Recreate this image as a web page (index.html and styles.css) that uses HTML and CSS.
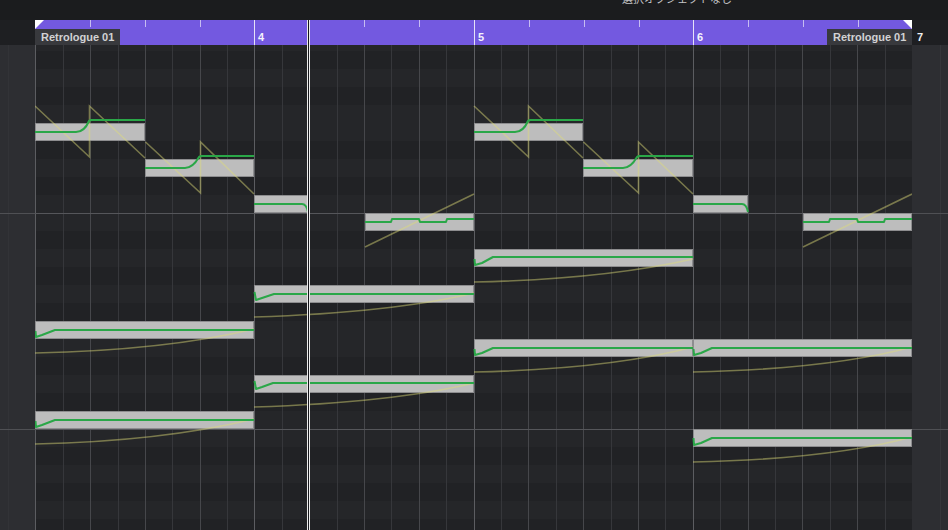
FILE: index.html
```html
<!DOCTYPE html>
<html lang="ja">
<head>
<meta charset="utf-8">
<title>Key Editor</title>
<link rel="stylesheet" href="styles.css">
</head>
<body>
<div class="app">
  <div class="topbar"><span class="status">選択オブジェクトなし</span></div>
  <div class="main">
    <div class="gutter gutter-left">
      <div class="gutter-head"></div>
      <div class="gutter-body gl-body"></div>
    </div>
    <div class="center">
      <div class="ruler">
        <div class="bar b3"><span class="num"></span></div>
        <div class="bar b4 wide"><span class="num">4</span></div>
        <div class="bar b5"><span class="num">5</span></div>
        <div class="bar b6"><span class="num">6</span></div>
        <span class="corner corner-left"></span>
        <span class="corner corner-right"></span>
        <span class="part-label label-left">Retrologue 01</span>
        <span class="part-label label-right">Retrologue 01</span>
      </div>
      <div class="grid">
        <svg class="grid-svg" width="877" height="485" viewBox="35 45 877 485" shape-rendering="crispEdges">
          <rect class="row-light" x="35" y="45" width="877" height="485"/>
          <g class="row-dark">
            <rect x="35" y="51" width="877" height="18"/>
            <rect x="35" y="87" width="877" height="18"/>
            <rect x="35" y="141" width="877" height="18"/>
            <rect x="35" y="177" width="877" height="18"/>
            <rect x="35" y="231" width="877" height="18"/>
            <rect x="35" y="267" width="877" height="18"/>
            <rect x="35" y="303" width="877" height="18"/>
            <rect x="35" y="357" width="877" height="18"/>
            <rect x="35" y="393" width="877" height="18"/>
            <rect x="35" y="447" width="877" height="18"/>
            <rect x="35" y="483" width="877" height="18"/>
            <rect x="35" y="519" width="877" height="18"/>
          </g>
          <path class="line-eighth" d="M63.5 45V530M118.5 45V530M172.5 45V530M227.5 45V530M282.5 45V530M337.5 45V530M391.5 45V530M446.5 45V530M501.5 45V530M556.5 45V530M611.5 45V530M665.5 45V530M720.5 45V530M775.5 45V530M830.5 45V530M885.5 45V530"/>
          <path class="line-beat" d="M90.5 45V530M145.5 45V530M200.5 45V530M309.5 45V530M364.5 45V530M419.5 45V530M528.5 45V530M583.5 45V530M638.5 45V530M748.5 45V530M802.5 45V530M857.5 45V530"/>
          <path class="line-bar" d="M35.5 45V530M254.5 45V530M474.5 45V530M693.5 45V530"/>
          <path class="line-octave" d="M35 213.5H912M35 429.5H912"/>

          <g class="notes">
            <rect x="35.5" y="123.5" width="109" height="17"/>
            <rect x="145.5" y="159.5" width="108" height="17"/>
            <rect x="254.5" y="195.5" width="53" height="17"/>
            <rect x="365.5" y="213.5" width="108" height="17"/>
            <rect x="254.5" y="285.5" width="219" height="17"/>
            <rect x="254.5" y="375.5" width="219" height="17"/>
            <rect x="35.5" y="321.5" width="218" height="17"/>
            <rect x="35.5" y="411.5" width="218" height="17"/>
            <rect x="474.5" y="123.5" width="108" height="17"/>
            <rect x="583.5" y="159.5" width="109" height="17"/>
            <rect x="693.5" y="195.5" width="54" height="17"/>
            <rect x="803.5" y="213.5" width="108" height="17"/>
            <rect x="474.5" y="249.5" width="218" height="17"/>
            <rect x="474.5" y="339.5" width="218" height="17"/>
            <rect x="693.5" y="339.5" width="218" height="17"/>
            <rect x="693.5" y="429.5" width="218" height="17"/>
          </g>

          <g class="pitch" shape-rendering="auto">
            <path d="M35 106L89.5 157L89.5 106L145 158"/>
            <path d="M145.5 142L200.5 193L200.5 142L254 194"/>
            <path d="M365 247L474 194"/>
            <path d="M254 317C350 314 420 306 474 293"/>
            <path d="M254 407C350 404 420 396 474 383"/>
            <path d="M35 353C130 351 200 342 254 329"/>
            <path d="M35 444C130 442 200 432 254 419"/>
            <path d="M474 106L528.5 157L528.5 106L583 158"/>
            <path d="M583.5 142L638.5 193L638.5 142L693 194"/>
            <path d="M803 247L912 194"/>
            <path d="M474 282C570 280 640 271 693 259"/>
            <path d="M474 372C570 370 640 361 693 347"/>
            <path d="M693 372C790 370 860 361 912 347"/>
            <path d="M693 462C790 460 860 451 912 437"/>
          </g>

          <g class="micro" shape-rendering="auto">
            <path d="M35 132H76C82 132 86 128 89 121L91 120H145"/>
            <path d="M145 168H185C191 168 195 164 199 157L201 156H254"/>
            <path d="M254 204H302C305 204 307 207 308 212"/>
            <path d="M365 222H391L392 219H419L420 222H446L447 219H474"/>
            <path d="M254.5 292L256 300L262 298L274 294H474"/>
            <path d="M254.5 381L256 389L262 387L273 383H474"/>
            <path d="M35.5 331L36 337L42 335L55 330H254"/>
            <path d="M35.5 421L36 427L42 425L55 420H254"/>
            <path d="M474 132H515C521 132 525 128 528 121L530 120H583"/>
            <path d="M583 168H623C629 168 633 164 637 157L639 156H693"/>
            <path d="M693 204H742C745 204 747 207 748 212"/>
            <path d="M803 222H829L830 219H857L858 222H884L885 219H912"/>
            <path d="M474.5 259L475 265L482 263L493 257H693"/>
            <path d="M474.5 349L475 355L482 353L493 348H693"/>
            <path d="M693.5 349L694 355L701 353L712 348H912"/>
            <path d="M693.5 438L694 445L701 443L712 438H912"/>
          </g>
        </svg>
      </div>
      <div class="playhead"></div>
    </div>
    <div class="gutter gutter-right">
      <div class="gutter-head"><span class="num end-num">7</span></div>
      <div class="gutter-body gr-body"></div>
    </div>
  </div>
</div>
</body>
</html>
```

FILE: styles.css
```css
* { box-sizing: border-box; }

html, body {
  margin: 0;
  padding: 0;
  background: #1b1c1e;
}

body {
  width: 948px;
  height: 530px;
  overflow: hidden;
  font-family: "Liberation Sans", Arial, sans-serif;
}

.app {
  display: flex;
  flex-direction: column;
  width: 948px;
  height: 530px;
}

.topbar {
  height: 20px;
  flex: none;
  background: #1b1c1e;
  padding-left: 622px;
  overflow: hidden;
}

.status {
  display: block;
  margin-top: -7px;
  font-family: "Noto Sans CJK JP", "Noto Sans", sans-serif;
  font-size: 11px;
  line-height: 11px;
  color: #c4c4c6;
  white-space: nowrap;
}

.main {
  display: flex;
  flex: 1;
  min-height: 0;
}

.gutter {
  display: flex;
  flex-direction: column;
  flex: none;
}

.gutter-left { width: 35px; }
.gutter-right { width: 36px; }

.gutter-head {
  height: 25px;
  flex: none;
  background: #1e1f22;
}

.gutter-body {
  flex: 1;
  background-color: #2d2e32;
  background-repeat: no-repeat;
}

.gl-body {
  background-image:
    linear-gradient(#4f5054, #4f5054),
    linear-gradient(#4f5054, #4f5054),
    linear-gradient(#323337, #323337);
  background-size: 100% 1px, 100% 1px, 1px 100%;
  background-position: 0 168px, 0 384px, 8px 0;
}

.gr-body {
  background-image:
    linear-gradient(#4f5054, #4f5054),
    linear-gradient(#4f5054, #4f5054),
    linear-gradient(#36373b, #36373b);
  background-size: 100% 1px, 100% 1px, 1px 100%;
  background-position: 0 168px, 0 384px, 28px 0;
}

.center {
  position: relative;
  width: 877px;
  flex: none;
  display: flex;
  flex-direction: column;
}

.ruler {
  position: relative;
  display: flex;
  height: 25px;
  flex: none;
  background: #7359e0;
}

.bar {
  width: 219px;
  flex: none;
  padding-left: 4px;
  background-image:
    linear-gradient(#c6bdf1, #c6bdf1),
    linear-gradient(#c6bdf1, #c6bdf1),
    linear-gradient(#c6bdf1, #c6bdf1);
  background-size: 1px 7px, 1px 7px, 1px 7px;
  background-position: 55px 0, 110px 0, 165px 0;
  background-repeat: no-repeat;
}

.bar.wide { width: 220px; }

.b4, .b5, .b6 {
  background-image:
    linear-gradient(#e6e2f8, #e6e2f8),
    linear-gradient(#c6bdf1, #c6bdf1),
    linear-gradient(#c6bdf1, #c6bdf1),
    linear-gradient(#c6bdf1, #c6bdf1);
  background-size: 1px 100%, 1px 7px, 1px 7px, 1px 7px;
  background-position: 0 0, 55px 0, 110px 0, 165px 0;
}

.num {
  display: block;
  padding-top: 11px;
  font-size: 11px;
  line-height: 13px;
  font-weight: bold;
  color: #f4f2fc;
}

.end-num {
  padding-left: 5px;
  color: #f0f0f0;
}

.corner {
  position: absolute;
  top: 0;
  width: 0;
  height: 0;
  border-style: solid;
}

.corner-left {
  left: 0;
  border-width: 9px 9px 0 0;
  border-color: #ffffff transparent transparent transparent;
}

.corner-right {
  right: 0;
  border-width: 0 9px 9px 0;
  border-color: transparent #ffffff transparent transparent;
}

.part-label {
  position: absolute;
  bottom: 0;
  height: 16px;
  padding: 0 6px;
  background: #38393d;
  color: #d2d2d4;
  font-size: 11px;
  line-height: 16px;
  font-weight: bold;
  white-space: nowrap;
}

.label-left { left: 0; width: 85px; }
.label-right { right: 0; width: 85px; }

.grid {
  flex: 1;
  min-height: 0;
  overflow: hidden;
}

.grid-svg { display: block; }

.row-light { fill: #252629; }
.row-dark rect { fill: #212225; }

.line-eighth { stroke: #36373b; stroke-width: 1; fill: none; }
.line-beat { stroke: #46474b; stroke-width: 1; fill: none; }
.line-bar { stroke: #5c5d61; stroke-width: 1; fill: none; }
.line-octave { stroke: #55565a; stroke-width: 1; fill: none; }

.notes rect {
  fill: #bdbdbd;
  stroke: #8d8d8f;
  stroke-width: 1;
}

.pitch path {
  fill: none;
  stroke: rgba(222, 220, 120, 0.46);
  stroke-width: 1.6;
  stroke-linejoin: miter;
}

.micro path {
  fill: none;
  stroke: #2aa748;
  stroke-width: 2;
  stroke-linejoin: round;
  stroke-linecap: butt;
}

.playhead {
  position: absolute;
  top: 0;
  bottom: 0;
  left: 272px;
  width: 3px;
  border-left: 1px solid #ececec;
  border-right: 1px solid #ececec;
  background: #16171c;
}
```
